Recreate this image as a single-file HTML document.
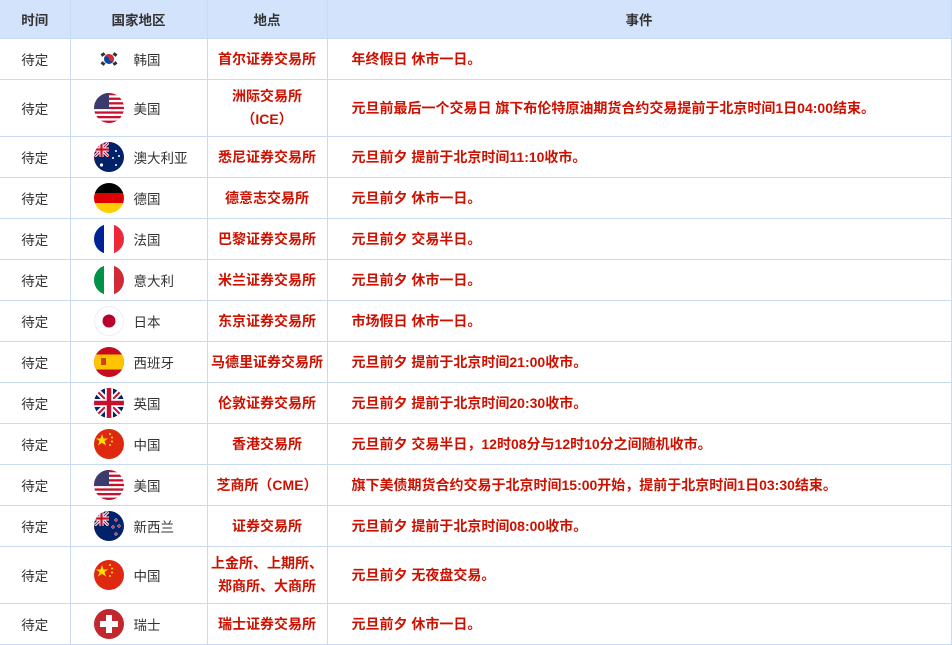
<!DOCTYPE html>
<html><head><meta charset="utf-8"><style>
body{margin:0;background:#fff;font-family:"Liberation Sans","Noto Sans CJK SC",sans-serif;font-size:13.5px;color:#333}
table{border-collapse:collapse;table-layout:fixed;width:951px;margin:0}
td,th{border:1px solid #c9daf5;padding:0;text-align:center;vertical-align:middle}
th{background:#d3e3fc;height:38px;font-weight:bold;color:#333;font-size:13.5px}
tr:first-child th{border-top:none}
td:first-child,th:first-child{border-left:none}
td{height:40px}
.r{color:#cc1100;font-weight:bold;line-height:23px;font-size:14px}
.e{text-align:left;padding-left:24px}
.c{text-align:left;padding-left:23px;white-space:nowrap}
.f{display:inline-block;width:30px;height:30px;border-radius:50%;overflow:hidden;vertical-align:middle;margin-right:10px}
.f svg{display:block}
.n{vertical-align:middle}
.tall td{height:56px}
</style></head><body>
<svg width="0" height="0" style="position:absolute">
<defs>
<g id="us"><rect width="30" height="30" fill="#fff"/><g fill="#c8102e"><rect y="0" width="30" height="2.3"/><rect y="4.6" width="30" height="2.3"/><rect y="9.2" width="30" height="2.3"/><rect y="13.8" width="30" height="2.3"/><rect y="18.4" width="30" height="2.3"/><rect y="23" width="30" height="2.3"/><rect y="27.6" width="30" height="2.4"/></g><rect width="15" height="16" fill="#3c3b6e"/></g>
<g id="uj"><rect width="30" height="30" fill="#012169"/><path d="M0 0L30 30M30 0L0 30" stroke="#fff" stroke-width="6"/><path d="M0 0L30 30M30 0L0 30" stroke="#c8102e" stroke-width="2"/><path d="M15 0V30M0 15H30" stroke="#fff" stroke-width="8"/><path d="M15 0V30M0 15H30" stroke="#c8102e" stroke-width="4.5"/></g>
<g id="au"><rect width="30" height="30" fill="#012169"/><svg width="15" height="15" viewBox="0 0 30 30"><use href="#uj"/></svg></g>
<g id="cn"><rect width="30" height="30" fill="#de2910"/><polygon points="8,5 9.5,9.5 14,9.5 10.5,12 12,16.5 8,13.8 4,16.5 5.5,12 2,9.5 6.5,9.5" fill="#ffde00"/><g fill="#ffde00"><circle cx="16" cy="5" r="1"/><circle cx="18" cy="8.5" r="1"/><circle cx="18" cy="12.5" r="1"/><circle cx="16" cy="16" r="1"/></g></g>
</defs></svg>
<table>
<colgroup><col style="width:70px"><col style="width:137px"><col style="width:120px"><col style="width:624px"></colgroup>
<tr><th>时间</th><th>国家地区</th><th>地点</th><th>事件</th></tr>
<tr><td>待定</td><td class="c"><span class="f" style="box-shadow:inset 0 0 0 1px #eee"><svg width="30" height="30"><rect width="30" height="30" fill="#fff"/><circle cx="15" cy="15" r="5" fill="#0047a0"/><path d="M10 15a5 5 0 0 1 10 0a2.5 2.5 0 0 1-5 0a2.5 2.5 0 0 0-5 0z" fill="#cd2e3a"/><g fill="#333"><rect x="7" y="9" width="4" height="3" transform="rotate(-35 9 10.5)"/><rect x="19" y="9" width="4" height="3" transform="rotate(35 21 10.5)"/><rect x="7" y="18" width="4" height="3" transform="rotate(35 9 19.5)"/><rect x="19" y="18" width="4" height="3" transform="rotate(-35 21 19.5)"/></g></svg></span><span class="n">韩国</span></td><td class="r">首尔证券交易所</td><td class="r e">年终假日 休市一日。</td></tr>
<tr class="tall"><td>待定</td><td class="c"><span class="f"><svg width="30" height="30"><use href="#us"/></svg></span><span class="n">美国</span></td><td class="r">洲际交易所<br>（ICE）</td><td class="r e">元旦前最后一个交易日 旗下布伦特原油期货合约交易提前于北京时间1日04:00结束。</td></tr>
<tr><td>待定</td><td class="c"><span class="f"><svg width="30" height="30"><use href="#au"/><g fill="#fff"><circle cx="7.5" cy="23" r="1.6"/><circle cx="22" cy="9" r="1"/><circle cx="25" cy="14" r="1"/><circle cx="19" cy="16" r="1"/><circle cx="22" cy="23" r="1"/></g></svg></span><span class="n">澳大利亚</span></td><td class="r">悉尼证券交易所</td><td class="r e">元旦前夕 提前于北京时间11:10收市。</td></tr>
<tr><td>待定</td><td class="c"><span class="f"><svg width="30" height="30"><rect width="30" height="10" fill="#000"/><rect y="10" width="30" height="10" fill="#dd0000"/><rect y="20" width="30" height="10" fill="#ffce00"/></svg></span><span class="n">德国</span></td><td class="r">德意志交易所</td><td class="r e">元旦前夕 休市一日。</td></tr>
<tr><td>待定</td><td class="c"><span class="f"><svg width="30" height="30"><rect width="10" height="30" fill="#002395"/><rect x="10" width="10" height="30" fill="#fff"/><rect x="20" width="10" height="30" fill="#ed2939"/></svg></span><span class="n">法国</span></td><td class="r">巴黎证券交易所</td><td class="r e">元旦前夕 交易半日。</td></tr>
<tr><td>待定</td><td class="c"><span class="f"><svg width="30" height="30"><rect width="10" height="30" fill="#009246"/><rect x="10" width="10" height="30" fill="#fff"/><rect x="20" width="10" height="30" fill="#ce2b37"/></svg></span><span class="n">意大利</span></td><td class="r">米兰证券交易所</td><td class="r e">元旦前夕 休市一日。</td></tr>
<tr><td>待定</td><td class="c"><span class="f" style="box-shadow:inset 0 0 0 1px #eee"><svg width="30" height="30"><circle cx="15" cy="15" r="6.5" fill="#bc002d"/></svg></span><span class="n">日本</span></td><td class="r">东京证券交易所</td><td class="r e">市场假日 休市一日。</td></tr>
<tr><td>待定</td><td class="c"><span class="f"><svg width="30" height="30"><rect width="30" height="30" fill="#c60b1e"/><rect y="7.5" width="30" height="15" fill="#ffc400"/><rect x="7" y="11" width="5" height="7" fill="#ad1519" opacity=".7"/></svg></span><span class="n">西班牙</span></td><td class="r">马德里证券交易所</td><td class="r e">元旦前夕 提前于北京时间21:00收市。</td></tr>
<tr><td>待定</td><td class="c"><span class="f"><svg width="30" height="30"><use href="#uj"/></svg></span><span class="n">英国</span></td><td class="r">伦敦证券交易所</td><td class="r e">元旦前夕 提前于北京时间20:30收市。</td></tr>
<tr><td>待定</td><td class="c"><span class="f"><svg width="30" height="30"><use href="#cn"/></svg></span><span class="n">中国</span></td><td class="r">香港交易所</td><td class="r e">元旦前夕 交易半日，12时08分与12时10分之间随机收市。</td></tr>
<tr><td>待定</td><td class="c"><span class="f"><svg width="30" height="30"><use href="#us"/></svg></span><span class="n">美国</span></td><td class="r">芝商所（CME）</td><td class="r e">旗下美债期货合约交易于北京时间15:00开始，提前于北京时间1日03:30结束。</td></tr>
<tr><td>待定</td><td class="c"><span class="f"><svg width="30" height="30"><use href="#au"/><g fill="#c8102e" stroke="#fff" stroke-width=".5"><circle cx="22" cy="9" r="1.3"/><circle cx="25" cy="15" r="1.3"/><circle cx="19" cy="16" r="1.3"/><circle cx="22" cy="23" r="1.3"/></g></svg></span><span class="n">新西兰</span></td><td class="r">证券交易所</td><td class="r e">元旦前夕 提前于北京时间08:00收市。</td></tr>
<tr class="tall"><td>待定</td><td class="c"><span class="f"><svg width="30" height="30"><use href="#cn"/></svg></span><span class="n">中国</span></td><td class="r">上金所、上期所、<br>郑商所、大商所</td><td class="r e">元旦前夕 无夜盘交易。</td></tr>
<tr><td>待定</td><td class="c"><span class="f"><svg width="30" height="30"><rect width="30" height="30" fill="#c1272d"/><rect x="12" y="6" width="6" height="18" fill="#fff"/><rect x="6" y="12" width="18" height="6" fill="#fff"/></svg></span><span class="n">瑞士</span></td><td class="r">瑞士证券交易所</td><td class="r e">元旦前夕 休市一日。</td></tr>
</table>
</body></html>
